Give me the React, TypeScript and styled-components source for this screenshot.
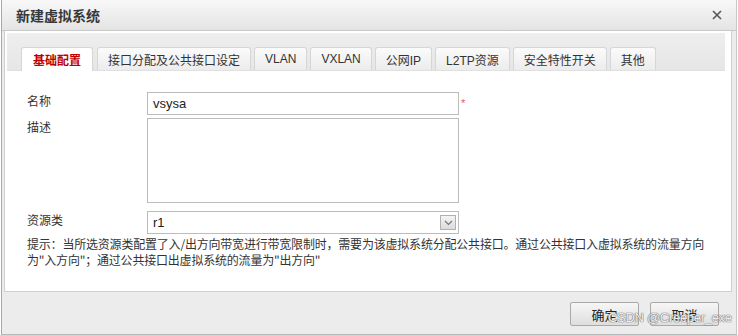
import React from "react";
import styled, { createGlobalStyle } from "styled-components";

const Global = createGlobalStyle`
  html, body { margin: 0; padding: 0; background: #ffffff; }
  body { font-family: "Liberation Sans", "Noto Sans CJK SC", sans-serif; font-size: 12px; color: #333; }
`;

const Dialog = styled.div`
  position: relative;
  width: 736px;
  height: 335px;
  margin-left: 1px;
  box-sizing: border-box;
  border-left: 1px solid #a8a8a8;
  border-right: 1px solid #c8c8c8;
  border-bottom: 1px solid #b8b8b8;
  display: flex;
  flex-direction: column;
  background: #ececec;
`;

const TitleBar = styled.div`
  height: 30px;
  flex: none;
  display: flex;
  align-items: center;
  justify-content: space-between;
  padding: 0 14px 0 14px;
  background: linear-gradient(#f8f8f8, #e4e4e4);
  border-bottom: 1px solid #c9c9c9;
`;

const Title = styled.div`
  font-family: "Noto Sans CJK SC", sans-serif;
  font-weight: bold;
  font-size: 14px;
  color: #383838;
`;

const Close = styled.div`
  width: 10px;
  height: 10px;
  display: flex;
`;

const Panel = styled.div`
  height: 261px;
  flex: none;
  margin: 0 4px 0 2px;
  box-sizing: border-box;
  background: #fff;
  border: 1px solid #cfcfcf;
  border-top: none;
  padding: 2px 6px 0 2px;
  display: flex;
  flex-direction: column;
`;

const TabStrip = styled.div`
  height: 38px;
  box-sizing: border-box;
  display: flex;
  align-items: flex-end;
  padding-left: 14px;
  background: linear-gradient(#eeeeee, #e6e6e6);
  border-bottom: 1px solid #e0e0e0;
`;

const Tab = styled.div<{ $active?: boolean }>`
  height: ${(p) => (p.$active ? 24 : 23)}px;
  box-sizing: border-box;
  margin-right: ${(p) => (p.$active ? 4 : 3)}px;
  margin-bottom: ${(p) => (p.$active ? -1 : 0)}px;
  padding: 0 ${(p) => (p.$active ? 11 : 10)}px;
  display: flex;
  align-items: center;
  border: 1px solid #d6d6d6;
  border-bottom: none;
  border-radius: 3px 3px 0 0;
  background: ${(p) => (p.$active ? "#ffffff" : "linear-gradient(#fbfbfb, #ececec)")};
  color: ${(p) => (p.$active ? "#c00000" : "#333")};
  font-weight: ${(p) => (p.$active ? "bold" : "normal")};
  font-size: 12px;
  font-family: "Liberation Sans", "Noto Sans CJK SC", sans-serif;
  white-space: nowrap;
`;

const Form = styled.div`
  padding: 21px 0 0 20px;
  display: flex;
  flex-direction: column;
`;

const Row = styled.div<{ $gap: number }>`
  display: flex;
  align-items: flex-start;
  margin-bottom: ${(p) => p.$gap}px;
`;

const Label = styled.div`
  width: 120px;
  flex: none;
  font-family: "Noto Sans CJK SC", sans-serif;
  font-size: 12px;
  line-height: 16px;
  padding-top: 1px;
  color: #333;
`;

const Input = styled.div`
  width: 312px;
  height: 23px;
  box-sizing: border-box;
  border: 1px solid #bcbcbc;
  padding: 0 5px;
  display: flex;
  align-items: center;
  font-family: "Liberation Sans", sans-serif;
  font-size: 13px;
  color: #222;
`;

const TextArea = styled.div`
  width: 312px;
  height: 85px;
  box-sizing: border-box;
  border: 1px solid #bcbcbc;
`;

const Req = styled.span`
  color: #f05a4a;
  font-size: 11px;
  margin-left: 2px;
  line-height: 14px;
  margin-top: 4px;
`;

const Select = styled(Input)`
  justify-content: space-between;
  padding-right: 2px;
`;

const DropBtn = styled.div`
  width: 16px;
  height: 15px;
  box-sizing: border-box;
  border: 1px solid #b0b0b0;
  background: linear-gradient(#f4f4f4, #dcdcdc);
  display: flex;
  align-items: center;
  justify-content: center;
`;

const Hint = styled.div`
  margin-top: 2px;
  width: 705px;
  font-family: "Noto Sans CJK SC", sans-serif;
  font-size: 12px;
  line-height: 16px;
  color: #333;
  letter-spacing: -0.2px;
`;

const Footer = styled.div`
  flex: 1;
  display: flex;
  justify-content: flex-end;
  align-items: flex-start;
  gap: 11px;
  padding: 10px 17px 0 0;
  background: #ececec;
`;

const Button = styled.div`
  width: 69px;
  height: 24px;
  box-sizing: border-box;
  border: 1px solid #a9a9a9;
  border-radius: 2px;
  background: linear-gradient(#f6f6f6, #dedede);
  display: flex;
  align-items: center;
  justify-content: center;
  font-family: "Noto Sans CJK SC", sans-serif;
  font-size: 13px;
  color: #222;
`;

const Watermark = styled.div`
  position: absolute;
  left: 606px;
  top: 310px;
  font-family: "Liberation Sans", sans-serif;
  font-size: 13px;
  color: rgba(255, 255, 255, 0.9);
  text-shadow: 0 0 1px #777, 0 0 1px #777, 0 0 1px #777;
  letter-spacing: -0.3px;
  pointer-events: none;
`;

const tabs = ["接口分配及公共接口设定", "VLAN", "VXLAN", "公网IP", "L2TP资源", "安全特性开关", "其他"];

export default function App() {
  return (
    <>
      <Global />
      <Dialog>
        <TitleBar>
          <Title>新建虚拟系统</Title>
          <Close>
            <svg width="10" height="10" viewBox="0 0 10 10">
              <path d="M1 1 L9 9 M9 1 L1 9" stroke="#555" strokeWidth="1.6" />
            </svg>
          </Close>
        </TitleBar>
        <Panel>
          <TabStrip>
            <Tab $active>基础配置</Tab>
            {tabs.map((t) => (
              <Tab key={t}>{t}</Tab>
            ))}
          </TabStrip>
          <Form>
            <Row $gap={3}>
              <Label>名称</Label>
              <Input>vsysa</Input>
              <Req>*</Req>
            </Row>
            <Row $gap={8}>
              <Label>描述</Label>
              <TextArea />
            </Row>
            <Row $gap={0}>
              <Label>资源类</Label>
              <Select>
                <span>r1</span>
                <DropBtn>
                  <svg width="9" height="6" viewBox="0 0 9 6">
                    <path d="M1 1 L4.5 4.5 L8 1" fill="none" stroke="#777" strokeWidth="1.2" />
                  </svg>
                </DropBtn>
              </Select>
            </Row>
            <Hint>
              提示：当所选资源类配置了入/出方向带宽进行带宽限制时，需要为该虚拟系统分配公共接口。通过公共接口入虚拟系统的流量方向
              <br />
              为"入方向"；通过公共接口出虚拟系统的流量为"出方向"
            </Hint>
          </Form>
        </Panel>
        <Footer>
          <Button>确定</Button>
          <Button>取消</Button>
        </Footer>
        <Watermark>CSDN @Creeper_exe</Watermark>
      </Dialog>
    </>
  );
}
